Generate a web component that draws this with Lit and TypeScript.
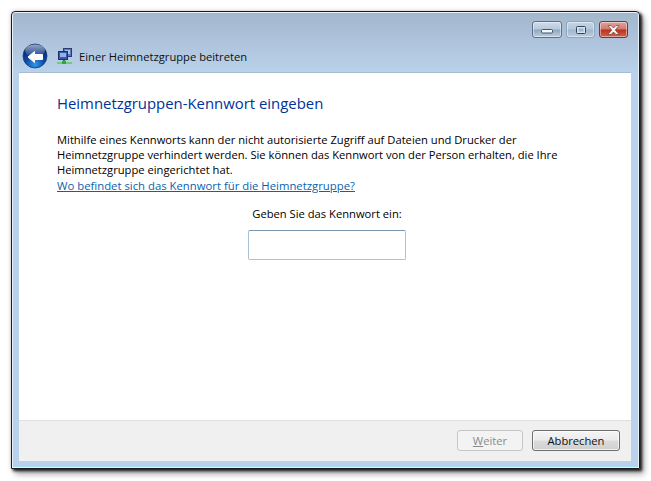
import { LitElement, html, css } from "lit";
import { customElement } from "lit/decorators.js";

@customElement("app-root")
export class AppRoot extends LitElement {
  static styles = css`
    :host { display: block; width: 651px; height: 481px; background: #fff; overflow: hidden;
      font-family: "Open Sans", "Noto Sans", "Liberation Sans", sans-serif; font-size: 11.2px; color: #000; }
    .page { padding: 11px 0 0 11px; }
    .win { box-sizing: border-box; width: 629px; height: 458px; border: 1px solid #1a1c20; border-radius: 4px 4px 0 0;
      box-shadow: inset 0 0 0 1px #e8f0f8, inset 0 -2px 0 0 #a5dcf2, 2px 2px 3px rgba(0,0,0,.85), 4px 5px 6px rgba(0,0,0,.35), 0 0 5px rgba(0,0,0,.18);
      background: linear-gradient(180deg, #a3b6cc 0, #aec4dc 30px, #b9d1ea 60px);
      padding: 9px 8px 7px 7px; display: flex; flex-direction: column; }
    .controls { display: flex; justify-content: flex-end; gap: 4px; height: 16px; padding-right: 3px; }
    .ctl { box-sizing: border-box; width: 29px; height: 17px; border: 1px solid #5f7186; border-radius: 3px;
      background: linear-gradient(180deg, #cfdced 0, #b7c9dc 48%, #8fa6bd 52%, #bccfe2 100%);
      display: flex; align-items: center; justify-content: center; box-shadow: inset 0 0 0 1px rgba(255,255,255,.45); }
    .ctl.min { width: 30px; }
    .ctl.max { border-color: #8fa5bb; background: linear-gradient(180deg, #c4d4e6 0, #b4c8dc 48%, #a0b6cc 52%, #b8cde2 100%); }
    .ctl.close { border-color: #6e3a36;
      background: linear-gradient(180deg, #e0a498 0, #d07a6c 48%, #b8301f 52%, #d4604c 100%); }
    .nav { height: 32px; display: flex; align-items: center; margin-top: 3px; padding-left: 3px; }
    .back { width: 26px; height: 26px; flex: none; margin-right: 9px; }
    .netico { width: 16px; height: 17px; flex: none; margin-right: 6px; }
    .navtitle { font-size: 11.2px; color: #101010; }
    .panel { flex: 1; background: #fff; display: flex; flex-direction: column; border-top: 1px solid #a9bdd2; }
    .content { flex: 1; padding: 20px 38px 0 38px; }
    h1 { margin: 0; font-weight: 400; font-size: 14.9px; line-height: 21px; color: #003399; }
    .text { margin: 18px 0 0; line-height: 15px; font-size: 11.2px; white-space: nowrap; }
    .link { display: block; color: #0a62ad; text-decoration: underline; line-height: 16px; font-size: 11.33px; margin-top: 1px; }
    .form { display: flex; flex-direction: column; align-items: center; margin-top: 12px; padding-left: 4px; }
    .label { line-height: 16px; font-size: 11.2px; }
    .input { box-sizing: border-box; width: 158px; height: 30px; margin-top: 8px; border: 1px solid #abc1d4; border-top-color: #7a97ae; border-radius: 2px; background: #fff; }
    .footer { height: 41px; box-sizing: border-box; background: #f0f0f0; border-top: 1px solid #dfdfdf;
      display: flex; justify-content: flex-end; align-items: center; gap: 9px; padding: 0 11px 1px 0; }
    .btn { box-sizing: border-box; height: 21px; display: flex; align-items: center; justify-content: center; border-radius: 3px; font-size: 11.2px; }
    .btn.off { width: 66px; color: #8a8a8a; border: 1px solid #c6c6c6; background: #f3f3f3; }
    .btn.on { width: 88px; color: #111; border: 1px solid #6e6e6e;
      background: linear-gradient(180deg, #f5f5f5 0, #ebebeb 48%, #dcdcdc 52%, #cfcfcf 100%); box-shadow: inset 0 0 0 1px rgba(255,255,255,.7); }
    u { text-decoration: underline; }
  `;

  render() {
    return html`<div class="page"><div class="win">
      <div class="controls">
        <div class="ctl min"><svg width="12" height="8" viewBox="0 0 12 8"><rect x="0.5" y="3.5" width="11" height="3.5" rx="1" fill="#f4f6f8" stroke="#44566c"/></svg></div>
        <div class="ctl max"><svg width="10" height="8" viewBox="0 0 10 8"><rect x="0.5" y="0.5" width="9" height="7" rx="1" fill="#d6e1ec" stroke="#33465c"/><rect x="2.5" y="2.5" width="5" height="3" fill="#9fb5ca" stroke="none"/></svg></div>
        <div class="ctl close"><svg width="13" height="10" viewBox="0 0 13 10"><path d="M1 .5h3l2.5 2.5L9 .5h3L8.300 5 12 9.500H9L6.500 7 4 9.500H1L4.700 5z" fill="#f6f4f2" stroke="#6e2f28" stroke-width=".6"/></svg></div>
      </div>
      <div class="nav">
        <svg class="back" viewBox="0 0 26 26">
          <defs>
            <radialGradient id="b" cx=".5" cy=".85" r=".75"><stop offset="0" stop-color="#2f9be8"/><stop offset=".5" stop-color="#0d4aa8"/><stop offset="1" stop-color="#06276e"/></radialGradient>
            <linearGradient id="g" x1="0" y1="0" x2="0" y2="1"><stop offset="0" stop-color="#fff" stop-opacity=".6"/><stop offset="1" stop-color="#fff" stop-opacity=".05"/></linearGradient>
          </defs>
          <circle cx="13" cy="13" r="12" fill="url(#b)" stroke="#1c3f78" stroke-width=".8"/>
          <ellipse cx="13" cy="7.500" rx="10" ry="6" fill="url(#g)"/>
          <path d="M6 14 L12.500 8.500 L12.500 11.500 L20.500 11.500 L20.500 16.500 L12.500 16.500 L12.500 19.500 Z" fill="#fff" stroke="#fff" stroke-width="1" stroke-linejoin="round"/>
        </svg>
        <svg class="netico" viewBox="0 0 16 17">
          <rect x="6.500" y="0.500" width="8" height="8" fill="#5c78b8" stroke="#2c3c70"/>
          <rect x="8" y="2" width="5" height="4" fill="#a4c4ec"/>
          <rect x="1.500" y="3.500" width="9" height="8" fill="#3c5aa8" stroke="#232c68"/>
          <rect x="3" y="5" width="6" height="4" fill="#8cb4e8"/>
          <rect x="6" y="12" width="2" height="2" fill="#4a7a4a"/>
          <rect x="0" y="14" width="15" height="2" fill="#6cd070"/>
          <rect x="5" y="13" width="4" height="3" fill="#2ea83c"/>
        </svg>
        <span class="navtitle">Einer Heimnetzgruppe beitreten</span>
      </div>
      <div class="panel">
        <div class="content">
          <h1>Heimnetzgruppen-Kennwort eingeben</h1>
          <p class="text">Mithilfe eines Kennworts kann der nicht autorisierte Zugriff auf Dateien und Drucker der<br>Heimnetzgruppe verhindert werden. Sie können das Kennwort von der Person erhalten, die Ihre<br>Heimnetzgruppe eingerichtet hat.</p>
          <a class="link">Wo befindet sich das Kennwort für die Heimnetzgruppe?</a>
          <div class="form">
            <div class="label">Geben Sie das Kennwort ein:</div>
            <div class="input"></div>
          </div>
        </div>
        <div class="footer">
          <div class="btn off"><span><u>W</u>eiter</span></div>
          <div class="btn on">Abbrechen</div>
        </div>
      </div>
    </div></div>`;
  }
}
